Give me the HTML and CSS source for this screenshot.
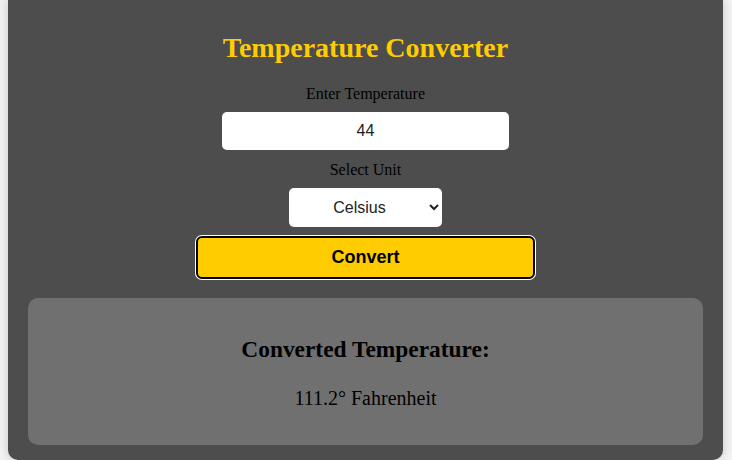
FILE: index.html
```html
<!DOCTYPE html>
<html lang="en">
<head>
<meta charset="utf-8">
<title>Temperature Converter</title>
<link rel="stylesheet" href="styles.css">
</head>
<body>
<div class="card">
  <h1 class="title">Temperature Converter</h1>
  <label class="label label-temp" for="temp">Enter Temperature</label>
  <input class="field" id="temp" type="text" value="44">
  <label class="label label-unit" for="unit">Select Unit</label>
  <select class="unit" id="unit">
    <option>Celsius</option>
    <option>Fahrenheit</option>
    <option>Kelvin</option>
  </select>
  <button class="convert" type="button">Convert</button>
  <div class="result">
    <h3 class="result-title">Converted Temperature:</h3>
    <p class="result-value">111.2° Fahrenheit</p>
  </div>
</div>
</body>
</html>
```
FILE: styles.css
```css
html, body {
  margin: 0;
  padding: 0;
}
body {
  background: #f2f2f2;
  font-family: "Liberation Serif", "Times New Roman", serif;
  height: 460px;
  overflow: hidden;
}
.card {
  margin: 0 9px 0 8px;
  background: #4d4d4d;
  border-radius: 0 0 10px 10px;
  box-shadow: 0 0 10px rgba(0, 0, 0, 0.18);
  padding: 32px 20px 15px;
  display: flex;
  flex-direction: column;
  align-items: center;
  height: 460px;
  box-sizing: border-box;
}
.title {
  margin: 0;
  font-size: 28px;
  line-height: 32px;
  font-weight: 700;
  color: #ffcc00;
}
.label {
  display: block;
  font-size: 16px;
  line-height: 18px;
  color: #000;
}
.label-temp {
  margin-top: 21px;
  margin-bottom: 9px;
}
.label-unit {
  margin-top: 11px;
  margin-bottom: 9px;
}
.field {
  box-sizing: border-box;
  width: 287px;
  height: 38px;
  border: none;
  border-radius: 5px;
  padding: 10px;
  font-family: "Liberation Sans", Arial, sans-serif;
  font-size: 16px;
  text-align: center;
  color: #222;
  background: #fff;
  outline: none;
}
.unit {
  box-sizing: border-box;
  width: 153px;
  height: 39px;
  border: none;
  border-radius: 5px;
  padding: 0 8px;
  font-family: "Liberation Sans", Arial, sans-serif;
  font-size: 16px;
  text-align: center;
  text-align-last: center;
  color: #222;
  background: #fff;
}
.convert {
  box-sizing: border-box;
  margin-top: 9px;
  width: 339px;
  height: 43px;
  border: 2px solid #000;
  border-radius: 6px;
  box-shadow: 0 0 0 1px #fff;
  background: #ffcc00;
  color: #000;
  font-family: "Liberation Sans", Arial, sans-serif;
  font-size: 18px;
  font-weight: 700;
  padding: 0;
}
.result {
  box-sizing: border-box;
  align-self: stretch;
  margin-top: 19px;
  background: #707070;
  border-radius: 10px;
  padding: 38px 20px 35px;
  text-align: center;
}
.result-title {
  margin: 0 0 24px;
  font-size: 23.4px;
  line-height: 27px;
  font-weight: 700;
  color: #000;
}
.result-value {
  margin: 0;
  font-size: 20px;
  line-height: 23px;
  color: #000;
}
```
